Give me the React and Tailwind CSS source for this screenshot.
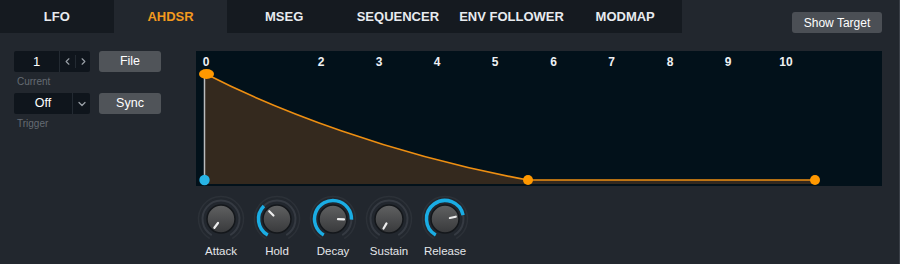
import { ChevronDown, ChevronLeft, ChevronRight } from 'lucide-react';

const tabs = ['LFO', 'AHDSR', 'MSEG', 'SEQUENCER', 'ENV FOLLOWER', 'MODMAP'];

const knobs = [
  { label: 'Attack', value: -143 },
  { label: 'Hold', value: -45 },
  { label: 'Decay', value: 92 },
  { label: 'Sustain', value: -150 },
  { label: 'Release', value: 78 },
];

const pt = (cx, cy, r, a) => {
  const rad = (a * Math.PI) / 180;
  return [cx + r * Math.sin(rad), cy - r * Math.cos(rad)];
};

const arc = (cx, cy, r, a1, a2) => {
  const [x1, y1] = pt(cx, cy, r, a1);
  const [x2, y2] = pt(cx, cy, r, a2);
  const large = a2 - a1 > 180 ? 1 : 0;
  return `M${x1} ${y1} A${r} ${r} 0 ${large} 1 ${x2} ${y2}`;
};

const Knob = ({ label, value }) => {
  const [ix1, iy1] = pt(25, 25, 5, value);
  const [ix2, iy2] = pt(25, 25, 11, value);
  return (
    <div className="flex flex-col items-center w-[50px]">
      <svg width="50" height="50" viewBox="0 0 50 50">
        <defs>
          <linearGradient id={`kg-${label}`} x1="0" y1="0" x2="0" y2="1">
            <stop offset="0" stopColor="#606162" />
            <stop offset="1" stopColor="#38393b" />
          </linearGradient>
        </defs>
        <path d={arc(25, 25, 22.5, -150, 150)} fill="none" stroke="#2c3138" strokeWidth="1.5" />
        <path d={arc(25, 25, 18.5, -150, 150)} fill="none" stroke="#353a42" strokeWidth="2" />
        {value > -140 && (
          <path d={arc(25, 25, 18.5, -150, value)} fill="none" stroke="#1aade4" strokeWidth="3.5" />
        )}
        <circle cx="25" cy="25" r="14" fill={`url(#kg-${label})`} stroke="#14171b" strokeWidth="1.5" />
        <line x1={ix1} y1={iy1} x2={ix2} y2={iy2} stroke="#ededed" strokeWidth="2.2" strokeLinecap="round" />
      </svg>
      <span className="text-[11.5px] leading-[14px] text-[#e4e6ea] whitespace-nowrap">{label}</span>
    </div>
  );
};

const Envelope = () => {
  const nums = [
    [10, '0'], [125, '2'], [183, '3'], [241, '4'], [299, '5'],
    [357.5, '6'], [415.5, '7'], [474, '8'], [532, '9'], [590, '10'],
  ];
  const curve = 'C78 58 195 104 332 129';
  return (
    <svg width="686" height="135" viewBox="0 0 686 135" className="block">
      <rect x="0" y="0" width="686" height="135" fill="#02111a" />
      <path d={`M9 23 L10 23 ${curve} L619 129 L619 133 L9 133 Z`} fill="#34291e" />
      <path d={`M10 23 ${curve} L619 129`} fill="none" stroke="#ee8f12" strokeWidth="1.6" />
      <line x1="8.5" y1="20" x2="8.5" y2="129" stroke="#b9bbbd" strokeWidth="1.5" />
      {nums.map(([x, t]) => (
        <text
          key={t}
          x={x}
          y="15"
          textAnchor="middle"
          fill="#eef0f3"
          fontSize="12"
          fontWeight="700"
          fontFamily="'Liberation Sans', Arial, sans-serif"
        >
          {t}
        </text>
      ))}
      <ellipse cx="10.5" cy="23" rx="7.5" ry="5" fill="#ff9800" />
      <circle cx="8.5" cy="129" r="5.2" fill="#27b4e6" />
      <circle cx="332" cy="129" r="5" fill="#ff9800" />
      <circle cx="619" cy="129" r="5" fill="#ff9800" />
    </svg>
  );
};

export default function App() {
  return (
    <div className="w-[900px] h-[264px] bg-[#22272e] overflow-hidden font-['Liberation_Sans',Arial,sans-serif] border-r border-[#3a3f47]">
      <div className="flex h-[33px]">
        <div className="flex w-[682px] h-[33px] bg-[#151a20]">
          {tabs.map((t) => (
            <div
              key={t}
              className={`flex-1 flex items-center justify-center text-[13px] font-bold ${
                t === 'AHDSR' ? 'bg-[#22272e] text-[#f39a1e]' : 'text-[#e8ebef]'
              }`}
            >
              {t}
            </div>
          ))}
        </div>
        <button className="ml-auto mr-[17px] mt-[12px] h-[21px] w-[90px] rounded-[3px] bg-[#4b4f55] text-[12px] text-white">
          Show Target
        </button>
      </div>

      <div className="flex pt-[18px]">
        <div className="w-[196px] pl-[14px] shrink-0">
          <div className="flex items-start gap-[9px]">
            <div>
              <div className="flex h-[21px] w-[76px] rounded-[2px] bg-[#0f151c]">
                <div className="w-[46px] flex items-center justify-center text-[13px] text-white border-r border-[#232a32]">
                  1
                </div>
                <div className="flex-1 flex items-center justify-center text-[#9aa0a7]">
                  <ChevronLeft size={11} strokeWidth={2.5} />
                  <span className="w-px h-[13px] bg-[#232a32] mx-[2px]" />
                  <ChevronRight size={11} strokeWidth={2.5} />
                </div>
              </div>
              <div className="text-[10px] leading-[12px] text-[#656b73] mt-[4px] pl-[3px]">Current</div>
            </div>
            <button className="h-[21px] w-[62px] rounded-[3px] bg-[#505459] text-[12.5px] text-white">File</button>
          </div>
          <div className="flex items-start gap-[9px] mt-[5px]">
            <div>
              <div className="flex h-[21px] w-[76px] rounded-[2px] bg-[#0f151c]">
                <div className="w-[59px] flex items-center justify-center text-[12.5px] text-white border-r border-[#232a32]">
                  Off
                </div>
                <div className="flex-1 flex items-center justify-center text-[#9aa0a7]">
                  <ChevronDown size={12} strokeWidth={2.5} />
                </div>
              </div>
              <div className="text-[10px] leading-[12px] text-[#656b73] mt-[4px] pl-[3px]">Trigger</div>
            </div>
            <button className="h-[21px] w-[62px] rounded-[3px] bg-[#505459] text-[12.5px] text-white">Sync</button>
          </div>
        </div>

        <div className="flex flex-col">
          <Envelope />
          <div className="flex gap-[6px] mt-[8px]">
            {knobs.map((k) => (
              <Knob key={k.label} {...k} />
            ))}
          </div>
        </div>
      </div>
    </div>
  );
}
